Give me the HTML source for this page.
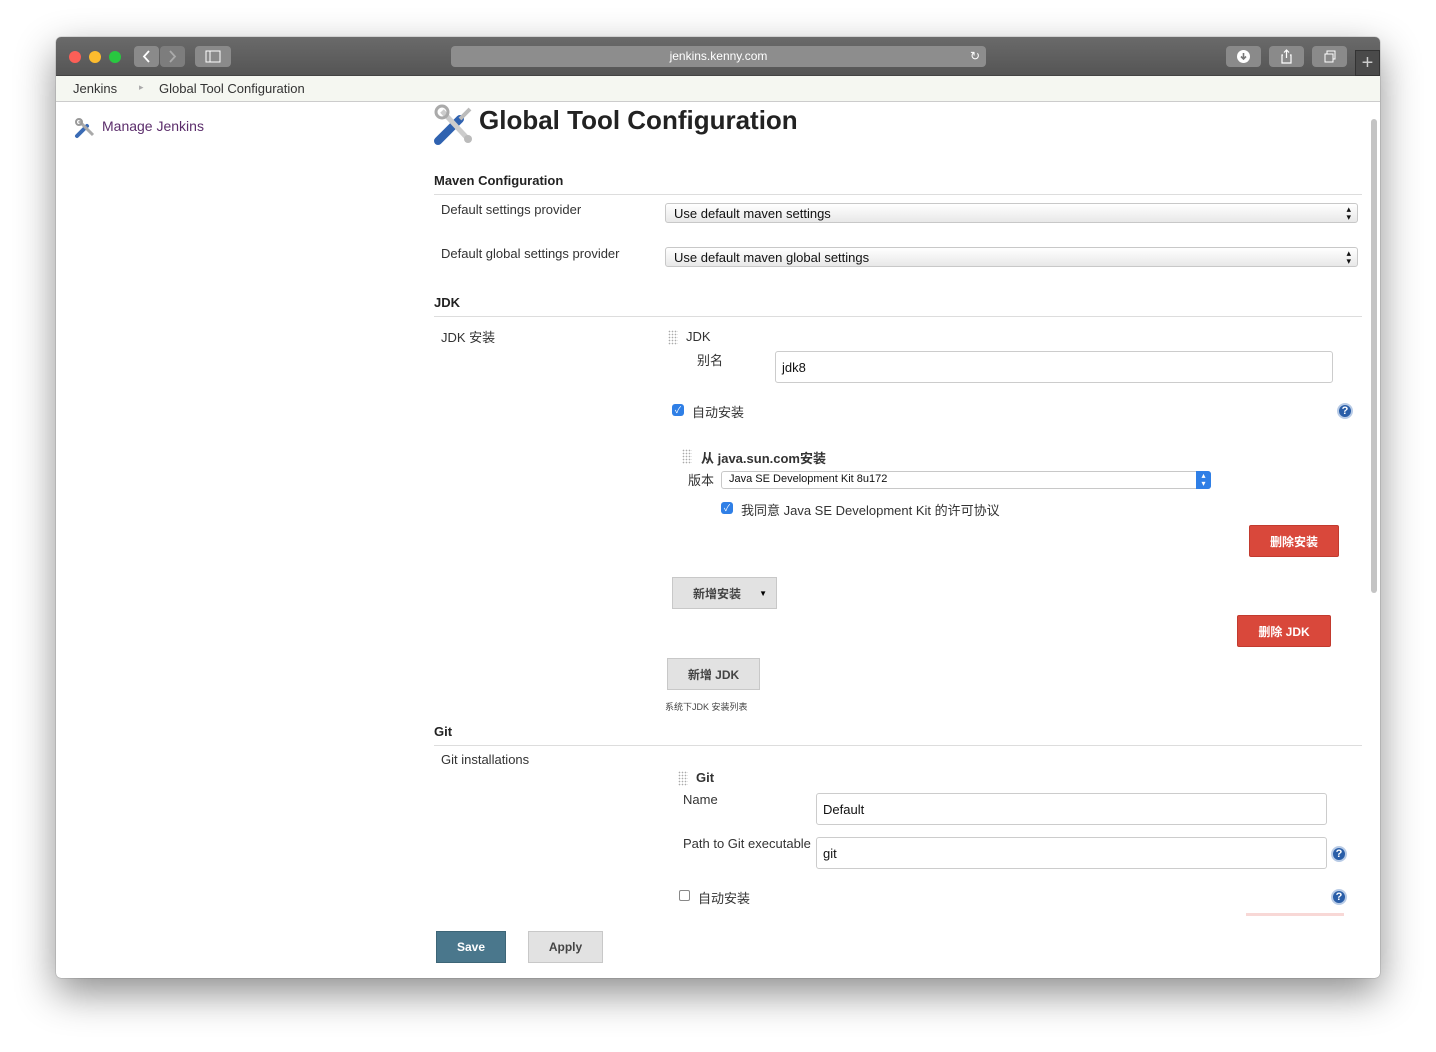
<!DOCTYPE html>
<html><head><meta charset="utf-8"><style>
*{box-sizing:border-box;margin:0;padding:0}
body{width:1436px;height:1052px;background:#fff;font-family:"Liberation Sans","Noto Sans CJK SC",sans-serif;font-size:13px;color:#333;position:relative;overflow:hidden}
.a{position:absolute;white-space:nowrap}
#win{position:absolute;left:56px;top:37px;width:1324px;height:941px;background:#fff;border-radius:5px;box-shadow:0 15px 40px rgba(0,0,0,.45),0 0 1px rgba(0,0,0,.6);overflow:hidden}
.tb{position:absolute;left:0;top:0;width:1324px;height:39px;background:linear-gradient(#6a6a6a,#555);border-bottom:1px solid #444}
.dot{position:absolute;top:14px;width:12px;height:12px;border-radius:6px}
.btn{position:absolute;top:9px;height:21px;background:#8a8a8a;border-radius:4px}
.crumb{position:absolute;left:0;top:39px;width:1324px;height:26px;background:#f5f7f1;border-bottom:1px solid #ccc}
.sec{position:absolute;left:378px;width:928px;border-bottom:1px solid #ddd;font-weight:bold;font-size:13px;color:#222;padding-bottom:6px}
.sel{position:absolute;height:20px;border:1px solid #c8c8c8;border-radius:3px;background:linear-gradient(#fff,#e8e8e8);padding:2px 8px;font-size:13px;color:#111}
.inp{position:absolute;border:1px solid #ccc;border-radius:3px;background:#fff;padding:0 6px;font-size:13px;color:#111;display:flex;align-items:center}
.gbtn{position:absolute;background:#e2e2e2;border:1px solid #c8c8c8;font-weight:bold;color:#444;font-size:12px;display:flex;align-items:center;justify-content:center}
.rbtn{position:absolute;background:#d9483b;border:1px solid #c23a2e;border-radius:2px;color:#fff;font-size:12px;font-weight:bold;display:flex;align-items:center;justify-content:center}
.help{position:absolute;width:16px;height:16px;border-radius:8px;background:#2a5ea8;border:2px solid #b8cbe6;color:#fff;font-size:11px;font-weight:bold;display:flex;align-items:center;justify-content:center}
.cb{position:absolute;width:12px;height:12px;border-radius:3px;background:#2f7fe6;color:#fff;font-size:9px;line-height:12px;text-align:center}
.grip{position:absolute;width:10px;height:15px;background-image:radial-gradient(#aaa 35%,transparent 40%);background-size:3px 3px}
</style></head><body>
<div id="win">
<div class="tb">
<div class="dot" style="left:13px;background:#fc5f57"></div>
<div class="dot" style="left:33px;background:#fdbc2e"></div>
<div class="dot" style="left:53px;background:#28c840"></div>
<div class="btn" style="left:78px;width:25px"><svg width="25" height="21"><path d="M15 5l-5 5.5 5 5.5" stroke="#fff" stroke-width="1.8" fill="none"/></svg></div>
<div class="btn" style="left:104px;width:25px;background:#7d7d7d"><svg width="25" height="21"><path d="M10 5l5 5.5-5 5.5" stroke="#aaa" stroke-width="1.8" fill="none"/></svg></div>
<div class="btn" style="left:139px;width:36px"><svg width="36" height="21"><rect x="11" y="5" width="14" height="11" stroke="#fff" fill="none"/><line x1="15" y1="5" x2="15" y2="16" stroke="#fff"/></svg></div>
<div class="btn" style="left:395px;width:535px;background:#8d8d8d;color:#fff;font-size:12px;text-align:center;line-height:21px">jenkins.kenny.com<span style="position:absolute;right:6px;top:0">↻</span></div>
<div class="btn" style="left:1170px;width:35px"><svg width="35" height="21"><circle cx="17.5" cy="10.5" r="6.5" fill="#fff"/><path d="M17.5 7v6M15 10.5l2.5 2.5 2.5-2.5" stroke="#777" stroke-width="1.6" fill="none"/></svg></div>
<div class="btn" style="left:1213px;width:35px"><svg width="35" height="21"><path d="M14 9h-1v8h9v-8h-1M17.5 4v8M15 6.5l2.5-2.5 2.5 2.5" stroke="#fff" stroke-width="1.2" fill="none"/></svg></div>
<div class="btn" style="left:1256px;width:35px"><svg width="35" height="21"><rect x="13" y="8" width="8" height="8" stroke="#fff" fill="none"/><path d="M15 8V5h8v8h-2" stroke="#fff" fill="none"/></svg></div>
<div style="position:absolute;left:1299px;top:13px;width:25px;height:26px;background:#4a4a4a;border:1px solid #333;color:#ccc;font-size:20px;text-align:center;line-height:24px">+</div>
</div>
<div class="crumb">
<span class="a" style="left:17px;top:5px;color:#333">Jenkins</span>
<span class="a" style="left:83px;top:6px;color:#aaa;font-size:9px">▸</span>
<span class="a" style="left:103px;top:5px;color:#333">Global Tool Configuration</span>
</div>
<div style="position:absolute;left:1315px;top:82px;width:6px;height:474px;background:#c4c4c4;border-radius:3px"></div>
<svg class="a" style="left:18px;top:80px" width="22" height="22"><path d="M3 19l10-10" stroke="#3a6bb5" stroke-width="4" stroke-linecap="round"/><path d="M5 4l14 14" stroke="#aaa" stroke-width="3"/><circle cx="5" cy="5" r="3" fill="none" stroke="#999" stroke-width="2"/></svg>
<span class="a" style="left:46px;top:81px;color:#5b2d6b;font-size:14px">Manage Jenkins</span>
<svg class="a" style="left:376px;top:66px" width="46" height="44"><path d="M6 38l22-22" stroke="#2f62b0" stroke-width="8" stroke-linecap="round"/><path d="M28 16l10-10" stroke="#bbb" stroke-width="4"/><path d="M10 8l26 28" stroke="#ccc" stroke-width="5"/><circle cx="10" cy="9" r="6" fill="none" stroke="#aaa" stroke-width="3"/><circle cx="36" cy="36" r="4" fill="#bbb"/></svg>
<span class="a" style="left:423px;top:68px;font-size:26px;font-weight:bold;color:#222">Global Tool Configuration</span>

<div class="sec" style="top:136px">Maven Configuration</div>
<span class="a" style="left:385px;top:165px">Default settings provider</span>
<div class="sel" style="left:609px;top:166px;width:693px">Use default maven settings<span style="position:absolute;right:6px;top:1px;font-size:9px;line-height:8px">▴<br>▾</span></div>
<span class="a" style="left:385px;top:209px">Default global settings provider</span>
<div class="sel" style="left:609px;top:210px;width:693px">Use default maven global settings<span style="position:absolute;right:6px;top:1px;font-size:9px;line-height:8px">▴<br>▾</span></div>

<div class="sec" style="top:258px">JDK</div>
<span class="a" style="left:385px;top:290px">JDK 安装</span>
<div class="grip" style="left:612px;top:293px"></div>
<span class="a" style="left:630px;top:292px">JDK</span>
<span class="a" style="left:641px;top:313px">别名</span>
<div class="inp" style="left:719px;top:314px;width:558px;height:32px">jdk8</div>
<div class="cb" style="left:616px;top:367px">✓</div>
<span class="a" style="left:636px;top:365px">自动安装</span>
<div class="help" style="left:1281px;top:366px">?</div>
<div class="grip" style="left:626px;top:412px"></div>
<span class="a" style="left:645px;top:411px;font-weight:bold">从 java.sun.com安装</span>
<span class="a" style="left:632px;top:433px">版本</span>
<div class="sel" style="left:665px;top:434px;width:490px;height:18px;font-size:11px;padding:1px 7px;background:#fff">Java SE Development Kit 8u172<span style="position:absolute;right:-1px;top:-1px;width:15px;height:18px;background:#2f7fe6;border-radius:0 3px 3px 0;color:#fff;font-size:8px;line-height:8px;text-align:center;padding-top:1px">▴<br>▾</span></div>
<div class="cb" style="left:665px;top:465px">✓</div>
<span class="a" style="left:685px;top:463px">我同意 Java SE Development Kit 的许可协议</span>
<div class="rbtn" style="left:1193px;top:488px;width:90px;height:32px">删除安装</div>
<div class="gbtn" style="left:616px;top:540px;width:105px;height:32px;justify-content:flex-start;padding-left:20px">新增安装<span style="position:absolute;right:9px;font-size:8px;color:#000">▼</span></div>
<div class="rbtn" style="left:1181px;top:578px;width:94px;height:32px">删除 JDK</div>
<div class="gbtn" style="left:611px;top:621px;width:93px;height:32px">新增 JDK</div>
<span class="a" style="left:609px;top:663px;font-size:9px;color:#444">系统下JDK 安装列表</span>

<div class="sec" style="top:687px">Git</div>
<span class="a" style="left:385px;top:715px">Git installations</span>
<div class="grip" style="left:622px;top:734px"></div>
<span class="a" style="left:640px;top:733px;font-weight:bold">Git</span>
<span class="a" style="left:627px;top:755px">Name</span>
<div class="inp" style="left:760px;top:756px;width:511px;height:32px">Default</div>
<span class="a" style="left:627px;top:799px">Path to Git executable</span>
<div class="inp" style="left:760px;top:800px;width:511px;height:32px">git</div>
<div class="help" style="left:1275px;top:809px">?</div>
<div style="position:absolute;left:623px;top:853px;width:11px;height:11px;border:1px solid #888;border-radius:2px"></div>
<span class="a" style="left:642px;top:851px">自动安装</span>
<div class="help" style="left:1275px;top:852px">?</div>
<div style="position:absolute;left:1190px;top:876px;width:98px;height:3px;background:#f8d8d6"></div>
<div class="gbtn" style="left:380px;top:894px;width:70px;height:32px;background:#4a778c;border-color:#3d6577;color:#fff">Save</div>
<div class="gbtn" style="left:472px;top:894px;width:75px;height:32px">Apply</div>
</div>
</body></html>
